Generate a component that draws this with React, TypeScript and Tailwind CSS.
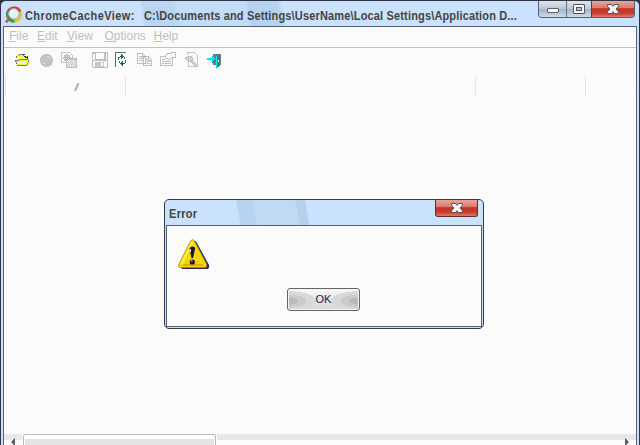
import type { ReactNode } from 'react';

function Icon({ children, className = '' }: { children: ReactNode; className?: string }) {
  return (
    <svg className={`h-4 w-4 shrink-0 ${className}`} viewBox="0 0 16 16" fill="none" shapeRendering="crispEdges">
      {children}
    </svg>
  );
}

function ChromeLogo() {
  return (
    <svg className="h-[18px] w-[18px] shrink-0" viewBox="0 0 18 18" fill="none">
      <circle cx="9" cy="8.5" r="6.6" stroke="#ecc61c" strokeWidth="3" />
      <path d="M3 6.2A6.6 6.6 0 0 1 15 5.6" stroke="#d8402f" strokeWidth="3.2" />
      <path d="M3.2 5.6A6.6 6.6 0 0 0 9.5 15.1" stroke="#35a04e" strokeWidth="3.2" />
      <circle cx="8.8" cy="7.8" r="5.2" fill="#dff1fa" stroke="#8fb4c4" />
      <path d="M6 7.4a3.2 3.2 0 0 1 3-2.6" stroke="#fff" strokeWidth="1.8" />
      <path d="M5.2 11.6.9 16.4" stroke="#b5604c" strokeWidth="2.6" />
    </svg>
  );
}

function CloseGlyph() {
  return (
    <svg className="h-[10px] w-[12px]" viewBox="0 0 12 10">
      <path d="M.6.5h3.9L6 2.3 7.5.5h3.9v1.8L9.1 5l2.3 2.7v1.8H7.5L6 7.7 4.5 9.5H.6V7.7L2.9 5 .6 2.3z" fill="#f7f7f7" stroke="#57515a" />
    </svg>
  );
}

const redButton =
  'flex items-center justify-center bg-[linear-gradient(#e9a59b_0%,#d97a6c_42%,#bf3526_48%,#c83c2a_75%,#dd7a6a_100%)]';

const menu = [
  { label: 'File', width: 'w-[28px]' },
  { label: 'Edit', width: 'w-[30px]' },
  { label: 'View', width: 'w-[37.5px]' },
  { label: 'Options', width: 'w-[49px]' },
  { label: 'Help', width: 'w-[30px]' },
];

function Toolbar() {
  return (
    <div className="flex h-7 items-start border-b border-white pl-[11px] pt-[4px]">
      <Icon>
        <path d="M2 4h2V2h4v2h4v4H2zM1 8h11v5H2z" fill="#f6f63c" />
        <path d="M3 5h1M5 5h1M7 5h1M4 6h1M6 6h1M8 6h1M3 10h1M5 10h1M7 10h1M9 10h1M4 11h1M6 11h1M8 11h1M10 11h1" stroke="#fff" />
        <path d="M4 2.5h4M3 3.5h1M8 3.5h1M1.5 4v2M9 4.5h2M0 8.5h4M4 7.5h9M.5 9v1M1.5 10v2M2 13.5h10M12.5 11v2M13.5 8v3" stroke="#77776a" />
        <path d="M8 2.5h2M9 4.5h2M10 5.5h3M12.5 4v3" stroke="#2525b0" />
      </Icon>
      <Icon className="ml-[8px]">
        <circle cx="7.5" cy="8.5" r="6.7" fill="#c3c3c3" />
        <path d="M8 4.5h2M10 5.5h1M11 6.5h1M4 11.5h2" stroke="#dedede" />
      </Icon>
      <Icon className="ml-[6px]">
        <path d="M.5.5h8l3 3v7H.5z" stroke="#c3c3c3" />
        <circle cx="6" cy="6" r="3.6" fill="#c3c3c3" />
        <path d="M5.5 6.5h10v9h-10z" fill="#c6c6c6" stroke="#bdbdbd" />
        <path d="M7 8.5h8M7 10.5h8M7 12.5h8M7 14.5h8" stroke="#f2f2f2" strokeDasharray="1 1" />
        <path d="M6 9.5h9M6 11.5h9M6 13.5h9" stroke="#f2f2f2" strokeDasharray="1 1" />
      </Icon>
      <Icon className="ml-[15px]">
        <path d="M.5.5h15v15H1.5l-1-1z" stroke="#bebebe" />
        <path d="M3.5 1v6.5h9V1M1 1.5h2M1 8.5h14M13.5 1v7" stroke="#bebebe" />
        <path d="M3 10h9v5H3z" fill="#c8c8c8" />
        <path d="M9 11h2v3H9z" fill="#fff" />
      </Icon>
      <Icon className="ml-[6px]">
        <path d="M2 1h12v14H2z" fill="#fff" />
        <path d="M1.5 15V.5h10" stroke="#666" />
        <path d="M7 2h1v1h1v1h1v1H9v1H8v1H7zM9 9H8v1H7v1H6v1h1v1h1v1h1z" fill="#087a13" />
        <path d="M4.5 8V5.5H6M6 4.5h2M11.5 8v3M10 11.5h1M9 11.5h1M10.5 5v2M5.5 9v2" stroke="#087a5c" />
      </Icon>
      <Icon className="ml-[7px]">
        <path d="M.5 1.5h5l3 3v7h-8zM6.5 4.5h5l3 3v6h-8z" fill="#fafafa" stroke="#bdbdbd" />
        <path d="M2 4.5h3M2 6.5h4M2 8.5h4M8 7.5h3M8 9.5h5M8 11.5h5M5.5 2v3h3M11.5 5v3h3" stroke="#c3c3c3" />
      </Icon>
      <Icon className="ml-[7px]">
        <path d="M.5 4.5h12v9H.5z" stroke="#bebebe" />
        <path d="M5 4 8 1.5h3L12 .5h3v5h-3L10 7H8L6 6z" fill="#fafafa" stroke="#bebebe" />
        <path d="M2 7.5h3M2 9.5h2M5 9.5h6M2 11.5h2M5 11.5h6" stroke="#bebebe" />
      </Icon>
      <Icon className="ml-[8px]">
        <path d="M3.5 3V.5h7l3 3v11h-9V10" stroke="#c5c5c5" />
        <path d="M1 5h2V4h4l2 2v3l4 4v2h-2L7 10H4L1 7z" fill="#c3c3c3" />
        <path d="M3 6.5h1M5 5.5h1M5 7.5h1M7 6.5h1M9 10.5h1M11 12.5h1" stroke="#f2f2f2" />
      </Icon>
      <Icon className="ml-[7px]">
        <path d="M6 2h8v11H6z" fill="#7b7b7b" />
        <path d="M9 4h1V3h2V2h1v12h-1v1h-2v1H9z" fill="#128b91" />
        <path d="M9.5 4v11" stroke="#00f3f3" />
        <path d="M0 6h5V4h1v1h1v1h1v2H7v1H6v1H5V8H0z" fill="#00eaf0" />
        <path d="M5 10.5h1M6 9.5h1M7 8.5h1" stroke="#075b69" />
        <path d="M11 8h1v2h-1z" fill="#fff" />
      </Icon>
    </div>
  );
}

function ErrorDialog() {
  return (
    <div className="absolute left-[164px] top-[199px] flex h-[130px] w-[320px] flex-col rounded-[5px] border border-[#353c49] bg-[#cae2fd] px-px pb-px">
      <div className="flex h-[25px] shrink-0 items-start justify-between overflow-hidden bg-[linear-gradient(80deg,transparent_0_23%,#b8d3ef_23.5%_28%,#c0daf4_28.5%_41.5%,#b3d0ed_42%_44.5%,transparent_45%)] pl-[3px] pr-1">
        <div className="mt-[7px] scale-y-110 text-[11px] font-bold leading-[14px] tracking-[0.3px] text-[#444]">Error</div>
        <div className={`${redButton} h-[17px] w-[43px] rounded-b-[3px] border border-t-0 border-[#652c2c]`}>
          <CloseGlyph />
        </div>
      </div>
      <div className="flex flex-1 flex-col border border-[#53627a] bg-[#fbfbfb]">
        <div className="flex h-[62px] pl-[11px] pt-[11px]">
          <svg className="h-[34px] w-[34px] shrink-0" viewBox="0 0 34 34">
            <path d="M15 4q3-1 4 2l12 22q1 4-3 4H4l-1-2z" fill="#29296b" />
            <path d="M12.5 4q2-3 4 0l12 23q1 3.500-2 3.500H3q-4 0-2-3.500z" fill="#f6d600" stroke="#a08e22" strokeWidth=".8" />
            <path d="M14.5 5 3.500 27" fill="none" stroke="#ffef3a" strokeWidth="2.5" />
            <path d="M5 28h20" stroke="#e3ac00" strokeWidth="2" />
            <path d="M11.5 12q0-2 3-2.500 3 0 2.500 2.500l-2 9h-1.500z" fill="#15153d" />
            <circle cx="14.3" cy="25" r="2.6" fill="#15153d" />
            <path d="M12.5 12v3M13 24h1.500" stroke="#fff" />
          </svg>
          <div className="ml-[16px] mt-[9px] whitespace-nowrap text-[11px] leading-[14px] text-white">
            Error 3: The system cannot find the path specified.
          </div>
        </div>
        <div className="ml-[120px] flex h-[23px] w-[73px] items-center justify-center rounded-[3px] border border-[#666] bg-[radial-gradient(ellipse_28px_10px_at_0_58%,#b9b9b9_0_35%,#cbcbcb_36%_65%,#d8d8d8_66%_99%,transparent_100%),radial-gradient(ellipse_28px_10px_at_100%_58%,#b9b9b9_0_35%,#cbcbcb_36%_65%,#d8d8d8_66%_99%,transparent_100%),linear-gradient(#fafafa,#e4e4e4_50%,#dadada)] text-[11px] leading-none text-[#20204b] shadow-[inset_0_0_0_1px_#f4f4f4]">
          OK
        </div>
      </div>
    </div>
  );
}

export default function App() {
  return (
    <div className="relative h-[445px] w-[640px] overflow-hidden bg-[#303341] font-['Liberation_Sans',Arial,sans-serif]">
      <div className="ml-px mr-[1px] flex h-[445px] flex-col rounded-t-[5px] border-t border-[#303341] bg-[#cae2fd] px-[2px]">
        <header className="flex h-[25px] shrink-0 items-start bg-[linear-gradient(80deg,transparent_0_22%,#b8d5f1_22.5%_27%,#c2ddf6_28%_38.5%,#b6d2ee_39%_43.5%,transparent_44.5%)] pl-[2px] pr-[2px]">
          <div className="mt-[5px]"><ChromeLogo /></div>
          <div className="mt-[8px] flex scale-y-110 whitespace-pre text-[11px] font-bold leading-[14px] text-[#444]">
            <span className="ml-[2px] w-[119px] tracking-[0.42px]">ChromeCacheView:</span>
            <span className="tracking-[0.16px]">C:\Documents and Settings\UserName\Local Settings\Application D...</span>
          </div>
          <div className="ml-auto flex h-[17px] w-[97px] overflow-hidden rounded-b-[4px] border border-t-0 border-[#555f71]">
            <div className="flex w-[28px] items-center justify-center border-r border-[#667083] bg-[linear-gradient(#dce6f0,#bac9d8_48%,#9fb1c5_50%,#cbdcec)] pt-[3px]">
              <span className="h-[5px] w-[12px] rounded-[1px] border border-[#65605f] bg-[#faf8f5]" />
            </div>
            <div className="flex w-[25px] items-center justify-center border-r border-[#693535] bg-[linear-gradient(#dce6f0,#bac9d8_48%,#9fb1c5_50%,#cbdcec)]">
              <span className="flex h-[10px] w-[12px] items-center justify-center rounded-[1px] border border-[#555] bg-[#f8f8f8]">
                <span className="h-[4px] w-[6px] border border-[#555] bg-[#b5c7df]" />
              </span>
            </div>
            <div className={`${redButton} flex-1`}><CloseGlyph /></div>
          </div>
        </header>

        <main className="flex min-h-0 flex-1 flex-col border-x border-t border-[#53627a] bg-[#fbfbfb]">
          <nav className="flex h-[21px] shrink-0 items-start border-b border-[#c2c2c2] pl-[5px] pt-[2px] text-[12px] leading-[15px] text-[#c0c0c0]">
            {menu.map(({ label, width }) => (
              <span key={label} className={`${width} shrink-0`}>
                <span className="underline underline-offset-1">{label[0]}</span>{label.slice(1)}
              </span>
            ))}
          </nav>
          <Toolbar />
          <div className="ml-px flex h-5 shrink-0 overflow-hidden whitespace-nowrap text-[11px] leading-[20px] text-white">
            <div className="flex w-[120px] items-center border-l border-[#e5e5e5] pl-[10px]">
              <span className="w-[58px]">Filename</span>
              <svg className="mt-[2px] h-[8px] w-[6px]" viewBox="0 0 6 8"><path d="M1 8 4.5 0" stroke="#b0b0b0" strokeWidth="2" /></svg>
            </div>
            <div className="w-[350px] border-l border-[#e5e5e5] pl-[8px]">URL</div>
            <div className="w-[110px] border-l border-[#e5e5e5] pl-[8px]">Content Type</div>
            <div className="w-[50px] border-l border-[#e5e5e5] pl-[8px]">File Size</div>
          </div>
          <div className="flex-1" />
          <div className="flex h-[11px] shrink-0 overflow-hidden">
            <div className="h-[6px] w-[18px] bg-[#e8e8e8]">
              <svg className="ml-[7px] mt-[4px] h-[8px] w-[4px]" viewBox="0 0 4 8"><path d="M4 0v8L0 4z" fill="#5b5b5b" /></svg>
            </div>
            <div className="ml-px h-[14px] w-[193px] shrink-0 rounded-[2px] border border-[#b9b9b9] bg-white px-px pt-[4px]">
              <div className="h-[6px] bg-[#e4e4e4]" />
            </div>
            <div className="ml-px h-[6px] flex-1 bg-[#e8e8e8]">
              <svg className="ml-auto mr-[7px] mt-[4px] h-[8px] w-[4px]" viewBox="0 0 4 8"><path d="M0 0v8l4-4z" fill="#5b5b5b" /></svg>
            </div>
          </div>
        </main>
      </div>
      <ErrorDialog />
    </div>
  );
}
